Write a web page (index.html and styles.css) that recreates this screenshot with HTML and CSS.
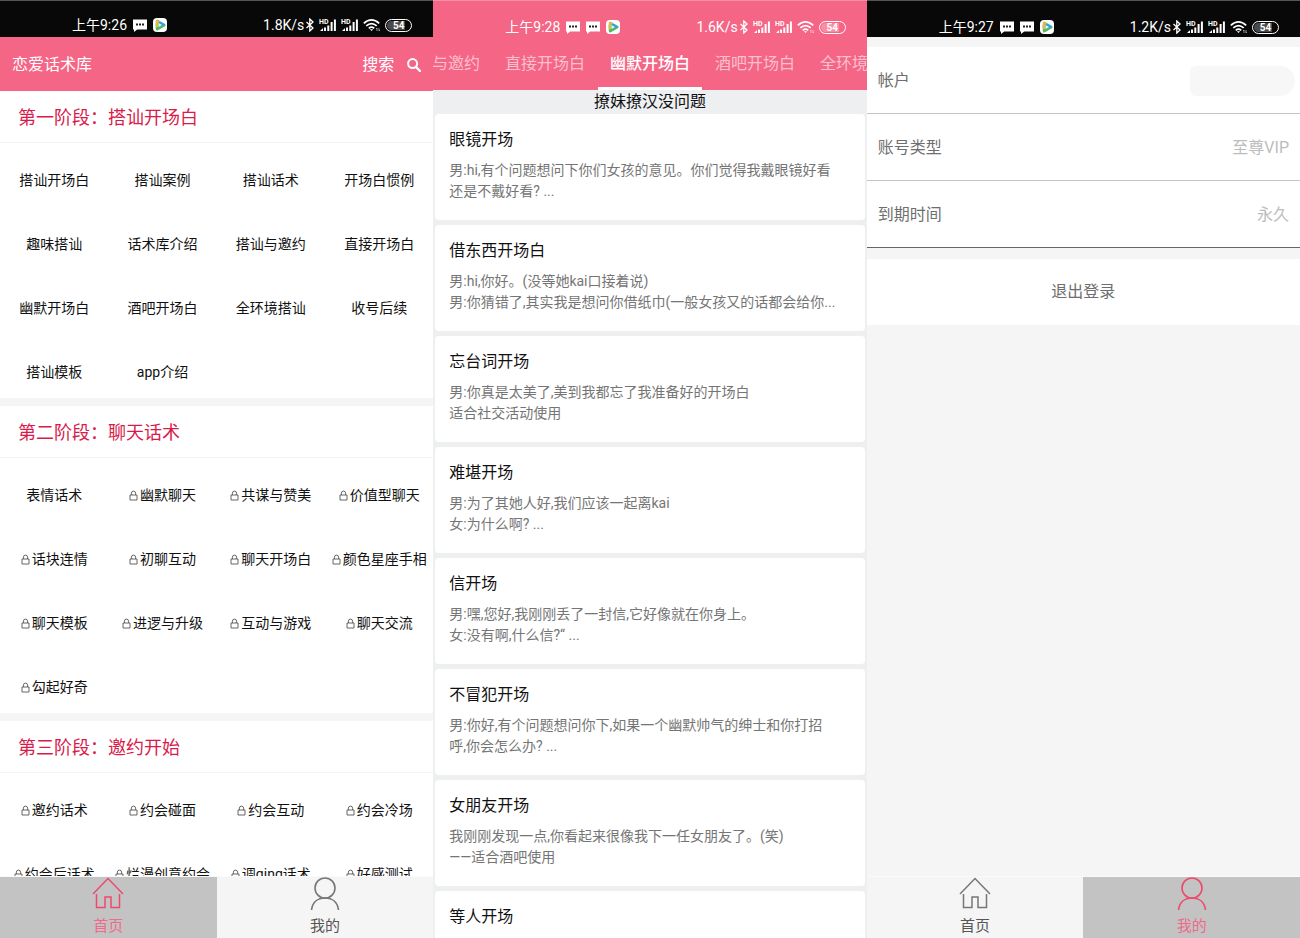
FILE: index.html
```html
<!DOCTYPE html>
<html lang="zh-CN">
<head>
<meta charset="utf-8">
<meta name="viewport" content="width=device-width, initial-scale=1">
<title>恋爱话术库</title>
<link rel="stylesheet" href="styles.css">
<script src="app.js" defer></script>
</head>
<body>
<svg class="defs" aria-hidden="true">
  <symbol id="chat" viewBox="0 0 14 13"><path d="M0 0.5h14v10H4.2L1 13l0-2.500H0z" fill="#fff"/><path d="M3 4.500h2v2H3zM6 4.500h2v2H6zM9 4.500h2v2H9z" class="chat-dots"/></symbol>
  <symbol id="play" viewBox="0 0 14 14"><rect width="14" height="14" rx="4" fill="#fff"/><path d="M3 2.600Q3.500 1.300 5 2L12 6Q13 7 12 8L5 12Q3.500 12.700 3 11.400Q2.300 7 3 2.600z" fill="#28a6dc"/><path d="M3 2.600Q3.500 1.300 5 2L7 3.200 5.200 5V9L3 10Q2.300 6 3 2.600z" fill="#e3bb34"/><path d="M5 12L12 8Q12.700 7.300 12.300 6.700L5.200 9 2.800 9.500Q2.800 11 3 11.400Q3.500 12.700 5 12z" fill="#5cb850"/><path d="M5.500 5L9 7 5.500 9z" fill="#e8f7f5"/></symbol>
  <symbol id="bluetooth" viewBox="0 0 10 14"><path d="M1.500 4L8 10 4.800 13V1L8 4 1.500 10" fill="none" stroke="#fff" stroke-width="1.300"/></symbol>
  <symbol id="signal" viewBox="0 0 18 14"><text x="0" y="5.500" class="hd">HD</text><path d="M1 13l2.500-2.500H4V13zM5 9.500h2V13H5zM8.300 7.500h2V13h-2zM11.600 4h2v9h-2zM14.900 1.500h2V13h-2z" fill="#fff"/></symbol>
  <symbol id="wifi" viewBox="0 0 18 14"><g fill="none" stroke="#fff" stroke-width="1.700"><path d="M.8 5.300Q8.500-1.700 16.200 5.300M3.300 7.900Q8.500 3.200 13.700 7.900M5.800 10.300Q8.500 8 11.200 10.300"/></g><path d="M6.900 11.300h3.200L8.500 13z" fill="#fff"/><path d="M14 10v3m0-3l-1 1m3-1v3m0 0l1-1" stroke="#fff" stroke-width=".8" opacity=".7"/></symbol>
  <symbol id="search" viewBox="0 0 14 14"><circle cx="5.600" cy="5.600" r="4.500" fill="none" stroke="#fff" stroke-width="2"/><path d="M9 9l4 4" stroke="#fff" stroke-width="2.400" stroke-linecap="round"/></symbol>
  <symbol id="lock" viewBox="0 0 9 11"><path d="M1 5h7v5H1zM2.400 5V3.200a2.100 2.100 0 0 1 4.200 0V5" fill="none" stroke="#555" stroke-width=".9"/></symbol>
  <symbol id="home" viewBox="0 0 32 32"><path d="M1 17L16 1.500 31 17M4.500 17v13.500H13V20h6v10.500h8.500V17" fill="none" stroke="currentColor" stroke-width="1.500"/></symbol>
  <symbol id="person" viewBox="0 0 32 34"><circle cx="16" cy="11" r="10" fill="none" stroke="currentColor" stroke-width="1.600"/><path d="M2.500 33C3.500 25.500 8.500 21 16 21s12.500 4.500 13.500 12" fill="none" stroke="currentColor" stroke-width="1.600"/></symbol>
</svg>
<main class="screens">
  <section class="screen home">
    <div class="status" data-time="上午9:26" data-speed="1.8K/s" data-chats="1"></div>
    <header class="appbar">
      <h1>恋爱话术库</h1>
      <button class="search" type="button">搜索<svg width="14" height="14"><use href="#search"/></svg></button>
    </header>
    <div class="stages" id="stages"></div>
    <nav class="tabbar">
      <button type="button" class="active"><svg width="32" height="32"><use href="#home"/></svg><span>首页</span></button>
      <button type="button"><svg width="32" height="34"><use href="#person"/></svg><span>我的</span></button>
    </nav>
  </section>

  <section class="screen feed">
    <div class="status" data-time="上午9:28" data-speed="1.6K/s" data-chats="2"></div>
    <nav class="topics">
      <button type="button">搭讪与邀约</button>
      <button type="button">直接开场白</button>
      <button type="button" class="active">幽默开场白</button>
      <button type="button">酒吧开场白</button>
      <button type="button">全环境搭讪</button>
    </nav>
    <p class="slogan">撩妹撩汉没问题</p>
    <div class="cards">
      <article><h2>眼镜开场</h2><p>男:hi,有个问题想问下你们女孩的意见。你们觉得我戴眼镜好看<br>还是不戴好看? ...</p></article>
      <article><h2>借东西开场白</h2><p>男:hi,你好。(没等她kai口接着说)<br>男:你猜错了,其实我是想问你借纸巾(一般女孩又的话都会给你...</p></article>
      <article><h2>忘台词开场</h2><p>男:你真是太美了,美到我都忘了我准备好的开场白<br>适合社交活动使用</p></article>
      <article><h2>难堪开场</h2><p>男:为了其她人好,我们应该一起离kai<br>女:为什么啊? ...</p></article>
      <article><h2>信开场</h2><p>男:嘿,您好,我刚刚丢了一封信,它好像就在你身上。<br>女:没有啊,什么信?“ ...</p></article>
      <article><h2>不冒犯开场</h2><p>男:你好,有个问题想问你下,如果一个幽默帅气的绅士和你打招<br>呼,你会怎么办? ...</p></article>
      <article><h2>女朋友开场</h2><p>我刚刚发现一点,你看起来很像我下一任女朋友了。(笑)<br>——适合酒吧使用</p></article>
      <article><h2>等人开场</h2></article>
    </div>
  </section>

  <section class="screen account">
    <div class="status" data-time="上午9:27" data-speed="1.2K/s" data-chats="2"></div>
    <div class="account-body">
      <dl class="details">
        <div><dt>帐户</dt><dd class="masked"></dd></div>
        <div><dt>账号类型</dt><dd>至尊VIP</dd></div>
        <div><dt>到期时间</dt><dd>永久</dd></div>
      </dl>
      <button type="button" class="logout">退出登录</button>
    </div>
    <nav class="tabbar">
      <button type="button"><svg width="32" height="32"><use href="#home"/></svg><span>首页</span></button>
      <button type="button" class="active"><svg width="32" height="34"><use href="#person"/></svg><span>我的</span></button>
    </nav>
  </section>
</main>
</body>
</html>
```

FILE: styles.css
```css
* { box-sizing: border-box; }
body, h1, h2, p, dl, dd { margin: 0; }
body { font: 16px/24px Roboto, "Noto Sans CJK SC", sans-serif; color: #111; background: #f5f5f5; }
button { border: 0; padding: 0; background: none; font: inherit; color: inherit; cursor: pointer; }
a { color: inherit; text-decoration: none; }
h1, h2 { font-size: 16px; font-weight: 400; }
svg { flex: none; display: block; }
.defs { display: none; }

.screens { display: grid; grid-template-columns: repeat(3, minmax(0, 1fr)); height: 100vh; }
.screen { display: flex; flex-direction: column; min-height: 0; overflow: hidden; }

/* Phone status bar */
.status { flex: none; display: flex; align-items: center; gap: 6px; height: 37px; padding: 12px 21px 0 72px; background: #080808; border-top: 1px solid #555; color: #fff; font-size: 14px; line-height: 20px; white-space: nowrap; }
.feed .status { background: #f56586; border-top-color: #f790a7; padding-top: 16px; }
.account .status { padding-top: 16px; }
.speed { margin-left: auto; }
.indicators { display: flex; align-items: center; gap: 4px; margin-left: -5px; }
.hd { font: 700 7px Roboto, sans-serif; fill: #fff; }
.chat-dots { fill: #222; }
.feed .chat-dots { fill: #f56586; }
.battery { width: 27px; height: 13px; border: 1px solid #fff; border-radius: 7px; background: linear-gradient(90deg, #fff4 80%, transparent 80%) content-box; padding: 1px; font-size: 10px; line-height: 10px; text-align: center; font-weight: 700; }

/* Home screen */
.home { background: #fff; }
.appbar { flex: none; display: flex; align-items: center; justify-content: space-between; height: 54px; padding: 2px 12px 0; background: #f56586; color: #fff; }
.search { display: flex; align-items: center; gap: 13px; }
.stages { flex: 1; min-height: 0; overflow: hidden; background: #f5f5f5; }
.stage { background: #fff; margin-bottom: 8px; }
.stage h2 { padding: 15px 18px 12px; border-bottom: 1px solid #f4f4f4; color: #d81b4b; font-size: 18px; }
.phrases { display: grid; grid-template-columns: repeat(4, minmax(0, 1fr)); row-gap: 44px; padding: 27px 0 16px; }
.phrases a { display: flex; align-items: center; justify-content: center; gap: 2px; font-size: 14px; line-height: 20px; white-space: nowrap; }

.tabbar { flex: none; display: grid; grid-template-columns: 1fr 1fr; height: 62px; background: #f5f5f5; color: #777; border-top: 1px solid #fafafa; }
.tabbar button { display: flex; flex-direction: column; align-items: center; justify-content: space-between; font-size: 15px; line-height: 24px; }
.tabbar span { color: #555; }
.tabbar .active { background: #c3c3c3; color: #ee4a70; }
.tabbar .active span { color: #f06a8a; }

/* Opening lines */
.feed { background: #eeeff1; }
.topics { flex: none; display: flex; justify-content: center; gap: 1px; height: 53px; background: #f56586; color: #fbc0ce; }
.topics button { flex: none; padding: 3px 12px 0; border-bottom: 3px solid transparent; white-space: nowrap; }
.topics .active { color: #fff; font-weight: 500; border-bottom-color: #fff; }
.slogan { flex: none; text-align: center; line-height: 24px; }
.cards { display: flex; flex-direction: column; gap: 5px; padding: 0 2px; }
.cards article { padding: 14px 14px 18px; background: #fff; border-radius: 4px; }
.cards p { margin-top: 8px; color: #757575; font-size: 14px; line-height: 21px; white-space: nowrap; }

/* Account */
.account { background: #f5f5f5; }
.account-body { flex: 1; min-height: 0; padding-top: 10px; color: #6e6e6e; }
.details div { display: flex; align-items: center; justify-content: space-between; height: 67px; padding: 1px 11px 0; background: #fff; border-bottom: 1px solid #c4c4c4; }
.details div:last-child { border-bottom-color: #666; }
.details dd { color: #bcbcbc; }
.details .masked { width: 105px; height: 30px; margin-right: -6px; border-radius: 6px 15px 15px 6px; background: #f7f7f7; }
.logout { display: block; width: 100%; height: 66px; margin-top: 11px; background: #fff; }
```

FILE: app.js
```js
const icon = (name, w, h) => `<svg width="${w}" height="${h}" aria-hidden="true"><use href="#${name}"/></svg>`;

document.querySelectorAll('.status').forEach(bar => {
  const { time, speed, chats } = bar.dataset;
  bar.innerHTML = `<span>${time}</span>` +
    icon('chat', 14, 13).repeat(Number(chats)) + icon('play', 14, 14) +
    `<span class="speed">${speed}</span><span class="indicators">` +
    icon('bluetooth', 10, 14) + icon('signal', 18, 14) + icon('signal', 18, 14) +
    icon('wifi', 18, 14) + `<span class="battery">54</span></span>`;
});

// A leading "*" marks a locked phrase group.
const stages = [
  ['第一阶段：搭讪开场白', '搭讪开场白 搭讪案例 搭讪话术 开场白惯例 趣味搭讪 话术库介绍 搭讪与邀约 直接开场白 幽默开场白 酒吧开场白 全环境搭讪 收号后续 搭讪模板 app介绍'],
  ['第二阶段：聊天话术', '表情话术 *幽默聊天 *共谋与赞美 *价值型聊天 *话块连情 *初聊互动 *聊天开场白 *颜色星座手相 *聊天模板 *进逻与升级 *互动与游戏 *聊天交流 *勾起好奇'],
  ['第三阶段：邀约开始', '*邀约话术 *约会碰面 *约会互动 *约会冷场 *约会后话术 *烂漫创意约会 *调qing话术 *好感测试']
];
document.getElementById('stages').innerHTML = stages.map(([title, list]) =>
  `<section class="stage"><h2>${title}</h2><div class="phrases">` +
  list.split(' ').map(p => `<a href="#">${p[0] === '*' ? icon('lock', 9, 11) + p.slice(1) : p}</a>`).join('') +
  '</div></section>').join('');
```
